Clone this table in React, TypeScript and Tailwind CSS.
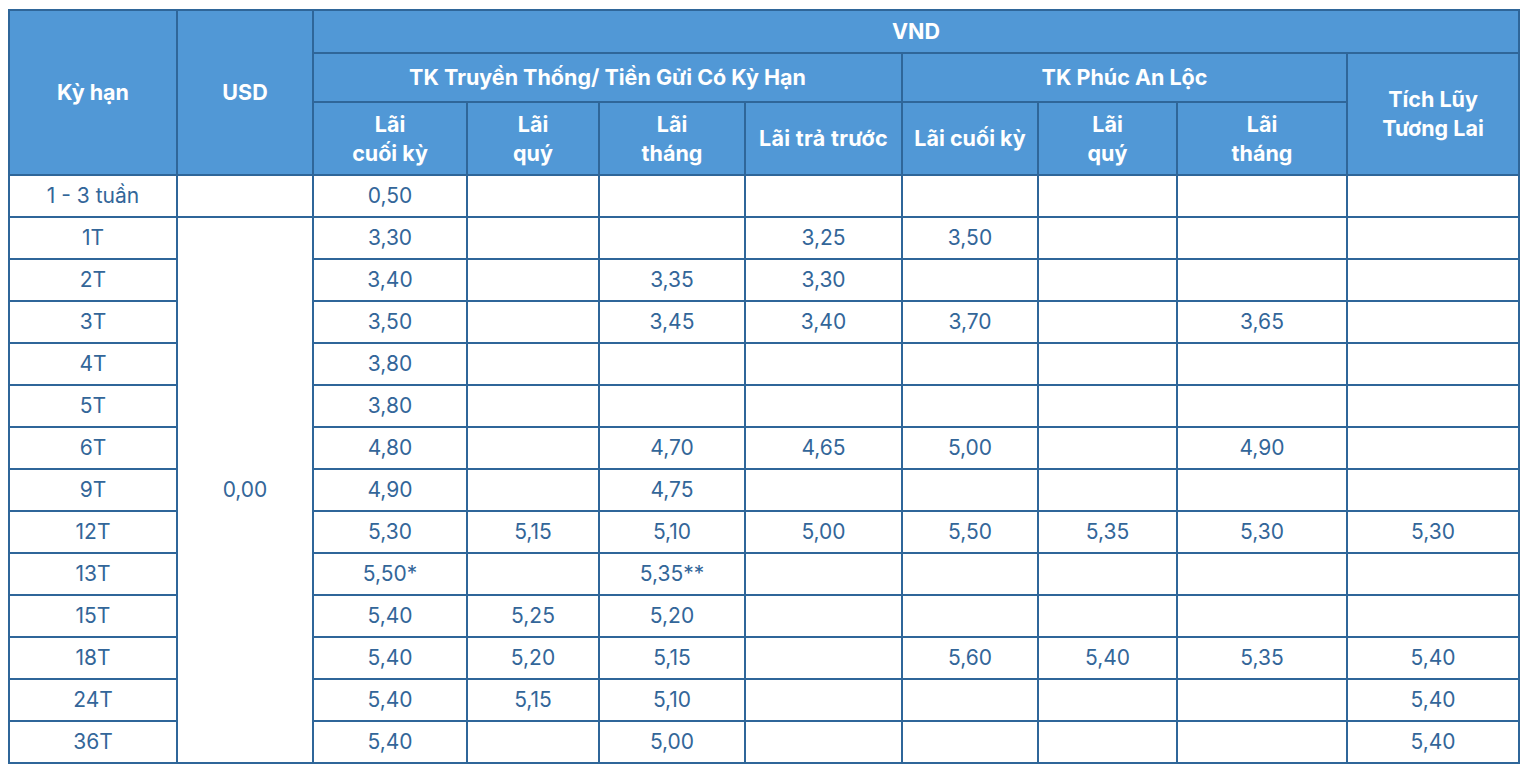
const rows: { term: string; vals: string[] }[] = [
  { term: '1 - 3 tuần', vals: ['0,50', '', '', '', '', '', '', ''] },
  { term: '1T', vals: ['3,30', '', '', '3,25', '3,50', '', '', ''] },
  { term: '2T', vals: ['3,40', '', '3,35', '3,30', '', '', '', ''] },
  { term: '3T', vals: ['3,50', '', '3,45', '3,40', '3,70', '', '3,65', ''] },
  { term: '4T', vals: ['3,80', '', '', '', '', '', '', ''] },
  { term: '5T', vals: ['3,80', '', '', '', '', '', '', ''] },
  { term: '6T', vals: ['4,80', '', '4,70', '4,65', '5,00', '', '4,90', ''] },
  { term: '9T', vals: ['4,90', '', '4,75', '', '', '', '', ''] },
  { term: '12T', vals: ['5,30', '5,15', '5,10', '5,00', '5,50', '5,35', '5,30', '5,30'] },
  { term: '13T', vals: ['5,50*', '', '5,35**', '', '', '', '', ''] },
  { term: '15T', vals: ['5,40', '5,25', '5,20', '', '', '', '', ''] },
  { term: '18T', vals: ['5,40', '5,20', '5,15', '', '5,60', '5,40', '5,35', '5,40'] },
  { term: '24T', vals: ['5,40', '5,15', '5,10', '', '', '', '', '5,40'] },
  { term: '36T', vals: ['5,40', '', '5,00', '', '', '', '', '5,40'] },
];

const widths = [168, 136, 154, 132, 146, 157, 136, 139, 170, 172];

const th = 'border-2 border-[#2f6699] bg-[#5198d6] text-white font-bold text-center align-middle text-[21.5px] leading-[29px] p-0';
const td = 'border-2 border-[#2f6699] bg-white text-[#336699] text-center align-middle text-[21px] leading-[24px] h-[42px] p-0';

export default function App() {
  return (
    <div className="bg-white w-[1530px] h-[772px] pt-[9px] pl-[8px]" style={{ fontFamily: 'Inter, "Noto Sans", sans-serif' }}>
      <table className="table-fixed border-collapse border-2 border-[#2f6699] w-[1510px]">
        <colgroup>
          {widths.map((w, i) => (
            <col key={i} style={{ width: w }} />
          ))}
        </colgroup>
        <thead>
          <tr className="h-[43px]">
            <th rowSpan={3} className={th}>Kỳ hạn</th>
            <th rowSpan={3} className={th}>USD</th>
            <th colSpan={8} className={th}>VND</th>
          </tr>
          <tr className="h-[49px]">
            <th colSpan={4} className={th}>TK Truyền Thống/ Tiền Gửi Có Kỳ Hạn</th>
            <th colSpan={3} className={th}>TK Phúc An Lộc</th>
            <th rowSpan={2} className={th}>Tích Lũy<br />Tương Lai</th>
          </tr>
          <tr className="h-[73px]">
            <th className={th}>Lãi<br />cuối kỳ</th>
            <th className={th}>Lãi<br />quý</th>
            <th className={th}>Lãi<br />tháng</th>
            <th className={`${th} tracking-[0.3px]`}>Lãi trả trước</th>
            <th className={th}>Lãi cuối kỳ</th>
            <th className={th}>Lãi<br />quý</th>
            <th className={th}>Lãi<br />tháng</th>
          </tr>
        </thead>
        <tbody>
          {rows.map((r, i) => (
            <tr key={r.term}>
              <td className={td}>{r.term}</td>
              {i === 0 && <td className={td}></td>}
              {i === 1 && <td rowSpan={13} className={td}>0,00</td>}
              {r.vals.map((v, j) => (
                <td key={j} className={td}>{v}</td>
              ))}
            </tr>
          ))}
        </tbody>
      </table>
    </div>
  );
}
